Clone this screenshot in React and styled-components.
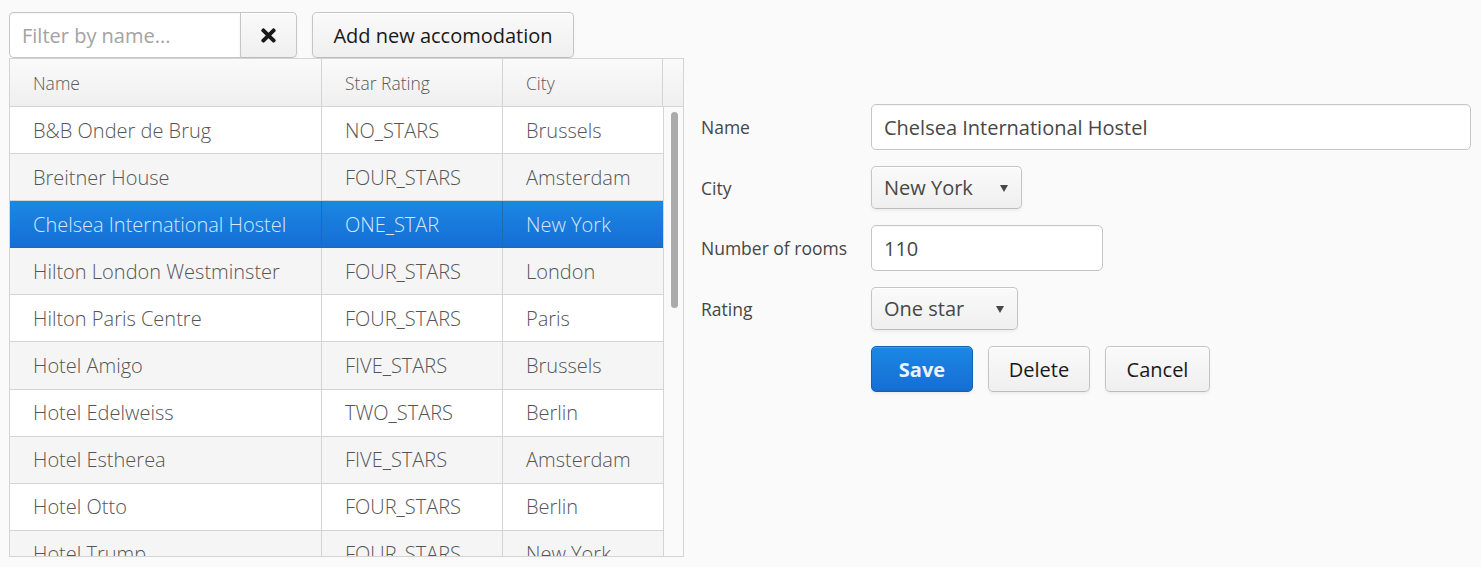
import React from "react";
import styled, { createGlobalStyle, css } from "styled-components";
import { FaTimes } from "react-icons/fa";

const GlobalStyle = createGlobalStyle`
  html, body {
    margin: 0;
    background: #fafafa;
  }
  body {
    font-family: "Open Sans", "Liberation Sans", sans-serif;
    color: #474747;
  }
  * { box-sizing: border-box; }
`;

const hotels = [
  ["B&B Onder de Brug", "NO_STARS", "Brussels"],
  ["Breitner House", "FOUR_STARS", "Amsterdam"],
  ["Chelsea International Hostel", "ONE_STAR", "New York"],
  ["Hilton London Westminster", "FOUR_STARS", "London"],
  ["Hilton Paris Centre", "FOUR_STARS", "Paris"],
  ["Hotel Amigo", "FIVE_STARS", "Brussels"],
  ["Hotel Edelweiss", "TWO_STARS", "Berlin"],
  ["Hotel Estherea", "FIVE_STARS", "Amsterdam"],
  ["Hotel Otto", "FOUR_STARS", "Berlin"],
  ["Hotel Trump", "FOUR_STARS", "New York"],
];

const COLS = "312px 181px 160px";

const Page = styled.div`
  display: flex;
  align-items: flex-start;
  padding: 12px 0 0 9px;
  height: 567px;
  overflow: hidden;
`;

const LeftPane = styled.div`
  display: flex;
  flex-direction: column;
  width: 675px;
`;

const Toolbar = styled.div`
  display: flex;
  height: 46px;
  gap: 15px;
`;

const FilterGroup = styled.div`
  display: flex;
`;

const buttonLook = css`
  background: linear-gradient(#fafafa 0%, #efefef 100%);
  border: 1px solid #c5c5c5;
  border-bottom-color: #bcbcbc;
  box-shadow: inset 0 1px 0 #fff, 0 2px 3px rgba(0, 0, 0, 0.05);
  color: #191919;
  font-family: "Open Sans", "Liberation Sans", sans-serif;
  font-size: 20px;
  border-radius: 5px;
  cursor: pointer;
`;

const FilterInput = styled.input`
  width: 231px;
  height: 46px;
  border: 1px solid #c5c5c5;
  border-right: none;
  border-radius: 5px 0 0 5px;
  background: #fff;
  box-shadow: inset 0 1px 0 #f7f7f7;
  padding: 0 12px;
  font-family: "Open Sans", "Liberation Sans", sans-serif;
  font-size: 20px;
  color: #474747;
  outline: none;
  &::placeholder { color: #a3a3a3; }
`;

const ClearButton = styled.button`
  ${buttonLook}
  width: 57px;
  height: 46px;
  border-radius: 0 5px 5px 0;
  display: flex;
  align-items: center;
  justify-content: center;
  padding: 0;
`;

const Button = styled.button`
  ${buttonLook}
  height: 46px;
  width: ${(p) => p.$w}px;
  padding: 0;
  ${(p) =>
    p.$primary &&
    css`
      background: linear-gradient(#1b87e3 2%, #166ed5 98%);
      border: 1px solid #1362b1;
      box-shadow: inset 0 1px 0 #4d98e6, inset 0 -1px 0 #166bca, 0 2px 3px rgba(0, 0, 0, 0.05);
      color: #ecf2f8;
      font-weight: 700;
      text-shadow: 0 -1px 0 rgba(0, 0, 0, 0.05);
    `}
`;

const Grid = styled.div`
  width: 675px;
  height: 499px;
  border: 1px solid #d4d4d4;
  background: #fafafa;
  display: flex;
  flex-direction: column;
  overflow: hidden;
`;

const HeaderRow = styled.div`
  display: grid;
  grid-template-columns: ${COLS} 1fr;
  height: 48px;
  flex: none;
  border-bottom: 1px solid #d4d4d4;
  background: linear-gradient(#fafafa 0%, #efefef 100%);
`;

const HeaderCell = styled.div`
  display: flex;
  align-items: center;
  padding-left: 23px;
  font-size: 17.5px;
  font-weight: 300;
  color: #5a5a5a;
  border-right: 1px solid #d4d4d4;
  &:last-child { border-right: none; padding: 0; }
`;

const BodyArea = styled.div`
  display: flex;
  flex: 1;
  min-height: 0;
`;

const Rows = styled.div`
  width: 654px;
  flex: none;
  display: flex;
  flex-direction: column;
  overflow: hidden;
  border-right: 1px solid #d4d4d4;
`;

const Row = styled.div`
  display: grid;
  grid-template-columns: ${COLS};
  height: 47.1px;
  flex: none;
  border-bottom: 1px solid #d4d4d4;
  background: ${(p) => (p.$odd ? "#f5f5f5" : "#fff")};
  color: #555;
  ${(p) =>
    p.$selected &&
    css`
      background: linear-gradient(#1b87e3 2%, #166ed5 98%);
      color: #d6e7fa;
      border-bottom-color: #1d69b4;
    `}
`;

const Cell = styled.div`
  display: flex;
  align-items: center;
  padding-left: 23px;
  font-size: 20px;
  font-weight: 300;
  white-space: nowrap;
  overflow: hidden;
  border-right: 1px solid ${(p) => (p.$selected ? "#1d69b4" : "#d4d4d4")};
  &:last-child { border-right: none; }
`;

const ScrollTrack = styled.div`
  flex: 1;
  position: relative;
  background: #fafafa;
`;

const ScrollThumb = styled.div`
  position: absolute;
  left: 7px;
  top: 5px;
  width: 7px;
  height: 196px;
  border-radius: 4px;
  background: #ababab;
`;

const Form = styled.div`
  margin: 92px 0 0 17px;
  display: flex;
  flex-direction: column;
  gap: 14.5px;
`;

const FormRow = styled.div`
  display: flex;
  align-items: center;
  height: 46px;
`;

const Label = styled.div`
  width: 170px;
  font-size: 17.5px;
  color: #464646;
`;

const TextField = styled.div`
  width: ${(p) => p.$w}px;
  height: 46px;
  border: 1px solid #c5c5c5;
  border-radius: 5px;
  background: #fff;
  box-shadow: inset 0 1px 0 #f7f7f7;
  display: flex;
  align-items: center;
  padding: 0 12px;
  font-size: 20px;
  color: #474747;
`;

const Select = styled.div`
  ${buttonLook}
  width: ${(p) => p.$w}px;
  height: 43px;
  display: flex;
  align-items: center;
  justify-content: space-between;
  padding: 0 12px;
  color: #474747;
  cursor: default;
`;

const Arrow = styled.span`
  width: 0;
  height: 0;
  border-left: 4px solid transparent;
  border-right: 4px solid transparent;
  border-top: 7px solid #474747;
  margin-right: 1px;
  margin-top: 1px;
`;

const Actions = styled.div`
  display: flex;
  gap: 15px;
  margin-left: 170px;
  height: 46px;
`;

export default function App() {
  return (
    <>
      <GlobalStyle />
      <Page>
        <LeftPane>
          <Toolbar>
            <FilterGroup>
              <FilterInput placeholder="Filter by name..." />
              <ClearButton>
                <FaTimes size={21} color="#191919" />
              </ClearButton>
            </FilterGroup>
            <Button $w={262}>Add new accomodation</Button>
          </Toolbar>
          <Grid>
            <HeaderRow>
              <HeaderCell>Name</HeaderCell>
              <HeaderCell>Star Rating</HeaderCell>
              <HeaderCell>City</HeaderCell>
              <HeaderCell />
            </HeaderRow>
            <BodyArea>
              <Rows>
                {hotels.map((h, i) => (
                  <Row key={h[0]} $odd={i % 2 === 1} $selected={i === 2}>
                    {h.map((v) => (
                      <Cell key={v} $selected={i === 2}>{v}</Cell>
                    ))}
                  </Row>
                ))}
              </Rows>
              <ScrollTrack>
                <ScrollThumb />
              </ScrollTrack>
            </BodyArea>
          </Grid>
        </LeftPane>
        <Form>
          <FormRow>
            <Label>Name</Label>
            <TextField $w={600}>Chelsea International Hostel</TextField>
          </FormRow>
          <FormRow>
            <Label>City</Label>
            <Select $w={151}>
              New York <Arrow />
            </Select>
          </FormRow>
          <FormRow>
            <Label>Number of rooms</Label>
            <TextField $w={232}>110</TextField>
          </FormRow>
          <FormRow>
            <Label>Rating</Label>
            <Select $w={147}>
              One star <Arrow />
            </Select>
          </FormRow>
          <Actions>
            <Button $primary $w={102}>Save</Button>
            <Button $w={102}>Delete</Button>
            <Button $w={105}>Cancel</Button>
          </Actions>
        </Form>
      </Page>
    </>
  );
}
